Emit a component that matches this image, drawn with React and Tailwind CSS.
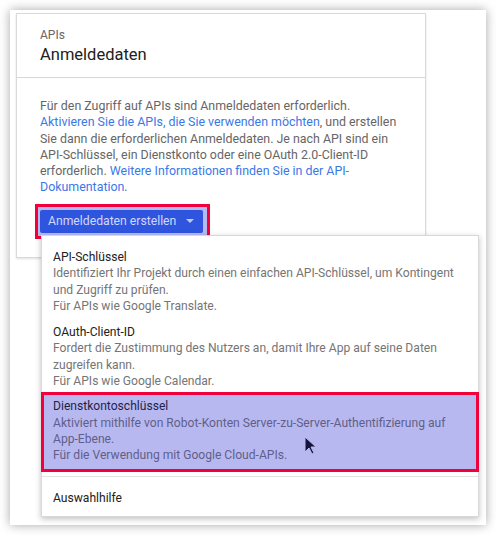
export default function App() {
  return (
    <div className="w-[496px] h-[536px] bg-white p-[10px] font-['Roboto',sans-serif] relative overflow-hidden">
      {/* Window */}
      <div className="w-[476px] h-[515px] bg-white shadow-[0_0_10px_rgba(0,0,0,0.35)] pt-[3px] pl-[6px]">
        {/* Card */}
        <div className="w-[410px] h-[245px] bg-white border border-[#dadada] shadow-[0_1px_2px_rgba(0,0,0,0.12)]">
          <div className="px-[23px] pt-[13px] pb-[11px] border-b border-[#d6d6d6]">
            <p className="text-[12px] leading-[16px] text-[#666]">APIs</p>
            <h1 className="text-[16.5px] leading-[22px] text-[#212121] mt-[1px]">Anmeldedaten</h1>
          </div>
          <div className="px-[23px] pt-[20px]">
            <p className="text-[12.4px] leading-[16.3px] text-[#666] whitespace-nowrap">
              Für den Zugriff auf APIs sind Anmeldedaten erforderlich.
              <br />
              <span className="text-[#3b78e7]">Aktivieren Sie die APIs, die Sie verwenden möchten</span>, und erstellen
              <br />
              Sie dann die erforderlichen Anmeldedaten. Je nach API sind ein
              <br />
              API-Schlüssel, ein Dienstkonto oder eine OAuth 2.0-Client-ID
              <br />
              erforderlich. <span className="text-[#3b78e7]">Weitere Informationen finden Sie in der API-</span>
              <br />
              <span className="text-[#3b78e7]">Dokumentation</span>.
            </p>
            <div className="mt-[8px] ml-[-5px] w-[175px] h-[35px] border-[3px] border-[#f0003c] bg-[#b8b9f1] pt-[3px] pl-[2px]">
              <button className="w-[163px] h-[23px] bg-[#2f55df] rounded-[2px] flex items-center pl-[8px] text-[12.2px] text-[#d2d8fa] whitespace-nowrap">
                <span>Anmeldedaten erstellen</span>
                <svg className="ml-[10px]" width="8" height="4" viewBox="0 0 8 4">
                  <path d="M0 0h8L4 4z" fill="#c0c8f6" />
                </svg>
              </button>
            </div>
          </div>
        </div>
      </div>

      {/* Dropdown menu */}
      <div className="absolute left-[41px] top-[235px] w-[438px] h-[282px] bg-white border border-[#d8d8d8] shadow-[0_2px_6px_rgba(0,0,0,0.25)] py-[8px] text-[12.1px] leading-[16.3px] whitespace-nowrap">
        <MenuItem
          title="API-Schlüssel"
          lines={[
            'Identifiziert Ihr Projekt durch einen einfachen API-Schlüssel, um Kontingent',
            'und Zugriff zu prüfen.',
            'Für APIs wie Google Translate.',
          ]}
        />
        <MenuItem
          title="OAuth-Client-ID"
          lines={[
            'Fordert die Zustimmung des Nutzers an, damit Ihre App auf seine Daten',
            'zugreifen kann.',
            'Für APIs wie Google Calendar.',
          ]}
        />
        <div className="mt-[-2px] mx-[-1px] border-[3px] border-[#f0003c] bg-[#b8b8f0] pl-[9px] pr-3 pt-[3px] pb-[5px]">
          <p className="text-[#1f1f4a]">Dienstkontoschlüssel</p>
          <p className="text-[#5f5f8a]">Aktiviert mithilfe von Robot-Konten Server-zu-Server-Authentifizierung auf</p>
          <p className="text-[#5f5f8a]">App-Ebene.</p>
          <p className="text-[#5f5f8a]">Für die Verwendung mit Google Cloud-APIs.</p>
        </div>
        <div className="mt-[4px] border-t border-[#e4e4e4]" />
        <div className="px-[11px] pt-[13px]">
          <p className="text-[#212121]">Auswahlhilfe</p>
        </div>
      </div>

      {/* Mouse cursor */}
      <svg className="absolute left-[304px] top-[436px]" width="13" height="19" viewBox="0 0 13 19">
        <path d="M1 1v15l4-4 3 6 2-1-3-6h5z" fill="#14143a" stroke="#b9b9f0" strokeWidth="1" />
      </svg>
    </div>
  );
}

function MenuItem({ title, lines }) {
  return (
    <div className="px-[11px] py-[5px]">
      <p className="text-[#212121]">{title}</p>
      {lines.map(l => (
        <p key={l} className="text-[#757575]">{l}</p>
      ))}
    </div>
  );
}
